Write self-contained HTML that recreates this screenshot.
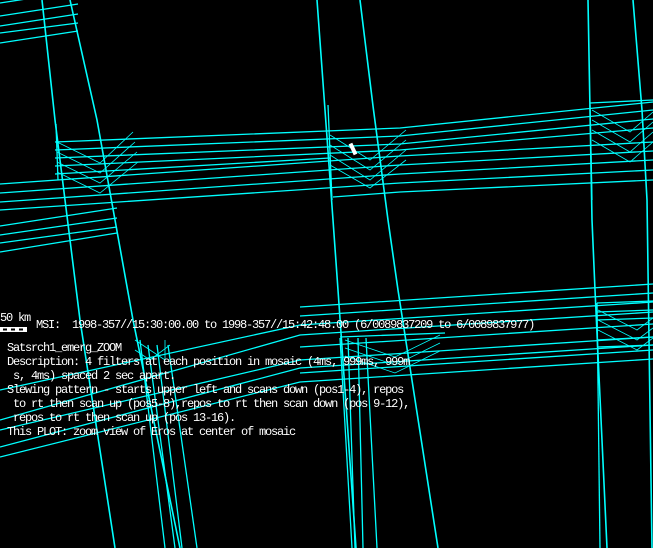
<!DOCTYPE html>
<html><head><meta charset="utf-8"><style>
html,body{margin:0;padding:0;background:#000;}
#w{position:relative;width:653px;height:548px;overflow:hidden;background:#000;}
svg{position:absolute;left:0;top:0;}
.t{position:absolute;color:#fff;font-family:"Liberation Mono",monospace;font-size:12px;letter-spacing:-1.2px;white-space:pre;line-height:14px;}
</style></head><body><div id="w">
<svg width="653" height="548" viewBox="0 0 653 548" fill="none" stroke="#00ffff" stroke-width="1.3">
<!-- top-left band -->
<path d="M0 3 L78 -9 M0 16 L78 4 M0 26 L78 14 M0 33 L78 23 M0 43 L78 31"/>
<!-- main verticals -->
<path d="M42 0 L55 120 L80 320 L115 548" stroke-width="1.6"/>
<path d="M70 0 L97 120 L133 320 L180 548" stroke-width="1.6"/>
<path d="M317 0 L325 110 L333 220 L338 290 L356 548" stroke-width="1.6"/>
<path d="M360 0 L373 106 L388 220 L398 290 L438 548" stroke-width="1.6"/>
<path d="M588 0 L590 110 L592 220 L595 290 L607 548" stroke-width="1.6"/>
<path d="M633 0 L642 110 L647 200 L652 548" stroke-width="1.6"/>
<!-- lower verticals -->
<path d="M140 340 L165 548 M148 345 L175 548 M157 345 L182 548 M168 345 L197 548"/>
<path d="M340 338 L343 390 L352 548 M348 338 L355 548 M358 338 L363 548 M366 338 L377 548"/>
<path d="M597 303 L600 548"/>
<!-- middle band -->
<path d="M0 184 L400 156 L653 142 M0 193 L400 165 L653 151 M0 202 L400 174 L653 160 M0 210 L400 183 L653 170"/>
<path d="M0 226 L117 208 M0 235 L117 218 M0 243 L117 227 M0 252 L117 233"/>
<path d="M55 142 L400 128 L653 102 M55 150 L400 136 L653 110 M55 158 L400 144 L653 119 M55 166 L400 150 L653 128 M55 174 L330 158"/>
<path d="M333 197 L400 192 L653 180"/>
<path d="M56 124 L58 180 M328 105 L332 200 M590 105 L592 200"/>
<path d="M590 103 L653 100"/>
<!-- chevrons -->
<g stroke-width="0.8">
<path d="M57 142 L100 163 L133 132 M57 152 L100 173 L135 142 M57 162 L100 183 L137 152 M57 172 L100 193 L138 162"/>
<path d="M330 135 L370 160 L406 130 M330 145 L370 170 L406 140 M330 155 L370 180 L406 150 M330 165 L370 188 L406 160"/>
<path d="M592 110 L630 132 L653 112 M592 120 L630 142 L653 122 M592 130 L630 152 L653 132 M592 140 L630 162 L653 142"/>
<path d="M345 340 L395 357 L440 335 M345 348 L395 365 L440 343 M345 356 L395 373 L440 351"/>
<path d="M598 310 L637 330 L653 318 M598 320 L637 340 L653 328 M598 330 L637 350 L653 338"/>
<path d="M135 340 L165 360 L165 340 M135 350 L150 360 L170 345"/>
</g>
<!-- lower band -->
<path d="M340 337 L445 333 M597 303 L653 301"/>
<path d="M0 390 L300 325 L653 302 M0 430 L300 360 L653 337 M0 447 L300 368 L653 345 M0 457 L300 382 L653 359"/>
<path d="M0 420 L300 335 L653 312 M300 307 L653 284 M300 316 L653 293 M300 347 L653 324 M300 373 L653 350"/>
<path d="M597 312 L653 310 M597 320 L653 318 M597 340 L653 337 M597 347 L653 345"/>
<!-- scale bar -->
<rect x="0.5" y="327.5" width="26" height="4" stroke="#fff" stroke-width="1" fill="#fff"/>
<path d="M3 329.5 H7 M11 329.5 H15 M19 329.5 H23" stroke="#000" stroke-width="2"/>
</svg>
<div class="t" style="left:0;top:311px;">50 km</div>
<div class="t" style="left:36px;top:318px;">MSI:  1998-357//15:30:00.00 to 1998-357//15:42:48.00 (6/0089837209 to 6/0089837977)</div>
<div class="t" style="left:7px;top:341px;">Satsrch1_emerg_ZOOM
Description: 4 filters at each position in mosaic (4ms, 999ms, 999m
 s, 4ms) spaced 2 sec apart.
Slewing pattern - starts upper left and scans down (pos1-4), repos
 to rt then scan up (pos5-8),repos to rt then scan down (pos 9-12),
 repos to rt then scan up (pos 13-16).
This PLOT: zoom view of Eros at center of mosaic</div>
<div style="position:absolute;left:351px;top:143px;width:4px;height:12px;background:#fff;transform:rotate(-25deg);"></div>
</div></body></html>
